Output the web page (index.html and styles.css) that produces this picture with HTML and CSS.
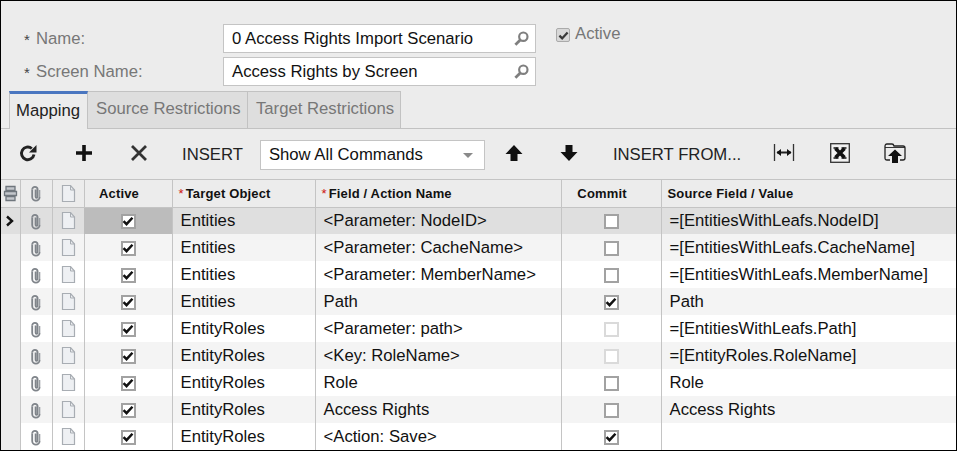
FILE: index.html
```html
<!DOCTYPE html>
<html lang="en">
<head>
<meta charset="utf-8">
<title>Mapping</title>
<link rel="stylesheet" href="styles.css">
</head>
<body>
<svg class="defs" width="0" height="0" aria-hidden="true">
  <defs>
    <symbol id="clip" viewBox="0 0 14 18"><path d="M3.200 5.500v7.500a3.700 3.700 0 0 0 7.400 0" fill="none" stroke="#7f848a" stroke-width="1.800"/><path d="M3.200 5.500a2.700 2.700 0 0 1 5.400 0v7.300a1 1 0 0 1-2 0V5.500" fill="none" stroke="#7f848a" stroke-width="1.800"/><path d="M10.600 13V6" fill="none" stroke="#9a9ea3" stroke-width="1.400"/></symbol>
    <symbol id="note" viewBox="0 0 15 17"><path d="M1.500.5h8l4 4.500v11.500h-12z" fill="#eef0f3" stroke="#a8adb3" stroke-width="1.200"/><path d="M9.500.5v4.500h4" fill="none" stroke="#a8adb3"/></symbol>
    <symbol id="search" viewBox="0 0 14 14"><circle cx="8.700" cy="5.300" r="3.900" fill="none" stroke="#7f7f7f" stroke-width="2"/><path d="M5.800 8.300 1.300 12.800" stroke="#7f7f7f" stroke-width="2.600"/></symbol>
    <symbol id="tick" viewBox="0 0 14 14"><path d="M1.800 7.200 5.300 10.700 12.200 3.200" fill="none" stroke="#111" stroke-width="2.900"/></symbol>
  </defs>
</svg>
<main class="frame">
  <section class="form">
    <div class="fields">
      <div class="field">
        <label class="label"><span class="star">*</span>Name:</label>
        <div class="input"><span>0 Access Rights Import Scenario</span><svg class="search"><use href="#search"/></svg></div>
      </div>
      <div class="field">
        <label class="label"><span class="star">*</span>Screen Name:</label>
        <div class="input"><span>Access Rights by Screen</span><svg class="search"><use href="#search"/></svg></div>
      </div>
    </div>
    <div class="active-check">
      <span class="form-box"><svg class="form-tick"><use href="#tick"/></svg></span>
      <span>Active</span>
    </div>
  </section>

  <nav class="tabs">
    <div class="tab tab-on">Mapping</div>
    <div class="tab">Source Restrictions</div>
    <div class="tab">Target Restrictions</div>
  </nav>

  <div class="toolbar">
    <button class="tool t-refresh" aria-label="Refresh"><svg width="20" height="20" viewBox="0 0 20 20"><path d="M16 11.500a6.300 6.300 0 1 1-2.200-6" fill="none" stroke="#222" stroke-width="2.900"/><path d="M11 9.500h7.500V2z" fill="#222"/></svg></button>
    <button class="tool t-add" aria-label="Add"><svg width="18" height="18" viewBox="0 0 18 18"><path d="M9 1v16M1 9h16" stroke="#111" stroke-width="3.600"/></svg></button>
    <button class="tool t-del" aria-label="Delete"><svg width="18" height="18" viewBox="0 0 18 18"><path d="M2 2l14 14M16 2 2 16" stroke="#333" stroke-width="2.800"/></svg></button>
    <button class="tool t-text t-insert">INSERT</button>
    <div class="select"><span>Show All Commands</span><i class="caret"></i></div>
    <button class="tool t-up" aria-label="Up"><svg width="18" height="18" viewBox="0 0 18 18"><path d="M9 1 17.500 10H12.500V17H5.500V10H.5z" fill="#111"/></svg></button>
    <button class="tool t-down" aria-label="Down"><svg width="18" height="18" viewBox="0 0 18 18"><path d="M9 17 17.500 8H12.500V1H5.500V8H.5z" fill="#111"/></svg></button>
    <button class="tool t-text t-from">INSERT FROM...</button>
    <button class="tool t-fit" aria-label="Fit columns"><svg width="22" height="20" viewBox="0 0 22 20"><path d="M1.500 1v17M20.500 1v17" stroke="#333" stroke-width="1.300"/><path d="M4 9.500h14" stroke="#222" stroke-width="2"/><path d="M3.500 9.500l4.500-3.500v7zM18.500 9.500l-4.500-3.500v7z" fill="#111"/></svg></button>
    <button class="tool t-xls" aria-label="Export to Excel"><svg width="20" height="20" viewBox="0 0 20 20"><rect x=".7" y=".7" width="18.600" height="18.600" fill="#f2f2f2" stroke="#333" stroke-width="1.300"/><path d="M5.500 5.500l9 9M14.500 5.500l-9 9" stroke="#111" stroke-width="3.600"/><path d="M3.500 5h5M11.500 5h5M3.500 15h5M11.500 15h5" stroke="#111" stroke-width="1.400"/></svg></button>
    <button class="tool t-upload" aria-label="Upload"><svg width="22" height="21" viewBox="0 0 22 21"><path d="M6 17H3Q1 17 1 15V3.500Q1 1 3 1h5q1.500 0 2 2h9q2 0 2 2v10q0 2-2 2h-3" fill="none" stroke="#222" stroke-width="1.300"/><path d="M1 4.500h20" stroke="#222" stroke-width=".9"/><path d="M11 6.500l7 6.500h-4v7h-6v-7H4z" fill="#111"/></svg></button>
  </div>

  <table class="grid">
    <colgroup>
      <col class="c-ind"><col class="c-clip"><col class="c-note"><col class="c-active"><col class="c-target"><col class="c-field"><col class="c-commit"><col class="c-source">
    </colgroup>
    <thead>
      <tr>
        <th class="ind"><svg width="15" height="17" viewBox="0 0 15 17"><path d="M3 1.500h9v4H3zM1.500 6.500h12v4h-12zM3 11.500h9v4H3z" fill="#c3c7cc" stroke="#6f767d" stroke-width="1.300"/></svg></th>
        <th class="ico"><svg class="i-clip"><use href="#clip"/></svg></th>
        <th class="ico"><svg class="i-note"><use href="#note"/></svg></th>
        <th class="mid">Active</th>
        <th><span class="req">*</span>Target Object</th>
        <th><span class="req">*</span>Field / Action Name</th>
        <th class="mid">Commit</th>
        <th>Source Field / Value</th>
      </tr>
    </thead>
    <tbody>
      <tr class="sel">
        <td class="ind"><svg width="10" height="12" viewBox="0 0 10 12"><path d="M2 1.500 7 6 2 10.500" fill="none" stroke="#111" stroke-width="2.400"/></svg></td>
        <td class="ico"><svg class="i-clip"><use href="#clip"/></svg></td><td class="ico"><svg class="i-note"><use href="#note"/></svg></td>
        <td class="mid cur"><span class="box"><svg class="tick"><use href="#tick"/></svg></span></td>
        <td>Entities</td><td>&lt;Parameter: NodeID&gt;</td><td class="mid"><span class="box"></span></td><td>=[EntitiesWithLeafs.NodeID]</td>
      </tr>
      <tr class="alt">
        <td class="ind"></td><td class="ico"><svg class="i-clip"><use href="#clip"/></svg></td><td class="ico"><svg class="i-note"><use href="#note"/></svg></td>
        <td class="mid"><span class="box"><svg class="tick"><use href="#tick"/></svg></span></td>
        <td>Entities</td><td>&lt;Parameter: CacheName&gt;</td><td class="mid"><span class="box"></span></td><td>=[EntitiesWithLeafs.CacheName]</td>
      </tr>
      <tr>
        <td class="ind"></td><td class="ico"><svg class="i-clip"><use href="#clip"/></svg></td><td class="ico"><svg class="i-note"><use href="#note"/></svg></td>
        <td class="mid"><span class="box"><svg class="tick"><use href="#tick"/></svg></span></td>
        <td>Entities</td><td>&lt;Parameter: MemberName&gt;</td><td class="mid"><span class="box"></span></td><td>=[EntitiesWithLeafs.MemberName]</td>
      </tr>
      <tr class="alt">
        <td class="ind"></td><td class="ico"><svg class="i-clip"><use href="#clip"/></svg></td><td class="ico"><svg class="i-note"><use href="#note"/></svg></td>
        <td class="mid"><span class="box"><svg class="tick"><use href="#tick"/></svg></span></td>
        <td>Entities</td><td>Path</td><td class="mid"><span class="box"><svg class="tick"><use href="#tick"/></svg></span></td><td>Path</td>
      </tr>
      <tr>
        <td class="ind"></td><td class="ico"><svg class="i-clip"><use href="#clip"/></svg></td><td class="ico"><svg class="i-note"><use href="#note"/></svg></td>
        <td class="mid"><span class="box"><svg class="tick"><use href="#tick"/></svg></span></td>
        <td>EntityRoles</td><td>&lt;Parameter: path&gt;</td><td class="mid"><span class="box off"></span></td><td>=[EntitiesWithLeafs.Path]</td>
      </tr>
      <tr class="alt">
        <td class="ind"></td><td class="ico"><svg class="i-clip"><use href="#clip"/></svg></td><td class="ico"><svg class="i-note"><use href="#note"/></svg></td>
        <td class="mid"><span class="box"><svg class="tick"><use href="#tick"/></svg></span></td>
        <td>EntityRoles</td><td>&lt;Key: RoleName&gt;</td><td class="mid"><span class="box off"></span></td><td>=[EntityRoles.RoleName]</td>
      </tr>
      <tr>
        <td class="ind"></td><td class="ico"><svg class="i-clip"><use href="#clip"/></svg></td><td class="ico"><svg class="i-note"><use href="#note"/></svg></td>
        <td class="mid"><span class="box"><svg class="tick"><use href="#tick"/></svg></span></td>
        <td>EntityRoles</td><td>Role</td><td class="mid"><span class="box"></span></td><td>Role</td>
      </tr>
      <tr class="alt">
        <td class="ind"></td><td class="ico"><svg class="i-clip"><use href="#clip"/></svg></td><td class="ico"><svg class="i-note"><use href="#note"/></svg></td>
        <td class="mid"><span class="box"><svg class="tick"><use href="#tick"/></svg></span></td>
        <td>EntityRoles</td><td>Access Rights</td><td class="mid"><span class="box"></span></td><td>Access Rights</td>
      </tr>
      <tr>
        <td class="ind"></td><td class="ico"><svg class="i-clip"><use href="#clip"/></svg></td><td class="ico"><svg class="i-note"><use href="#note"/></svg></td>
        <td class="mid"><span class="box"><svg class="tick"><use href="#tick"/></svg></span></td>
        <td>EntityRoles</td><td>&lt;Action: Save&gt;</td><td class="mid"><span class="box"><svg class="tick"><use href="#tick"/></svg></span></td><td></td>
      </tr>
    </tbody>
  </table>
</main>
</body>
</html>
```

FILE: styles.css
```css
* { box-sizing: border-box; }
html, body { margin: 0; padding: 0; }
body { width: 957px; height: 451px; overflow: hidden; font-family: "Liberation Sans", Arial, sans-serif; font-size: 16.7px; color: #111; }
.defs { display: block; height: 0; }
.frame { width: 957px; height: 451px; background: #ececec; border: 1px solid #000; overflow: hidden; display: flex; flex-direction: column; }

.form { display: flex; padding-top: 23px; height: 90px; flex: none; }
.fields { display: flex; flex-direction: column; gap: 4px; }
.field { display: flex; align-items: center; height: 29px; }
.label { width: 222px; padding-left: 23px; color: #777; display: flex; align-items: center; }
.star { width: 12px; font-size: 15px; color: #444; position: relative; top: 1px; }
.input { width: 313px; height: 29px; background: #fff; border: 1px solid #c4c4c4; padding: 0 6px 0 8px; display: flex; align-items: center; justify-content: space-between; color: #111; }
.search { width: 15px; height: 15px; }
.active-check { display: flex; align-items: flex-start; margin-left: 20px; color: #777; line-height: 20px; gap: 5px; }
.form-box { width: 14px; height: 14px; margin-top: 4px; background: #d8d8d8; border: 1px solid #aaa; border-radius: 2px; display: flex; align-items: center; justify-content: center; }
.form-tick { width: 11px; height: 11px; opacity: .8; }

.tabs { display: flex; height: 38px; flex: none; padding-left: 8px; border-bottom: 1px solid #c2c2c2; }
.tab { background: #dedede; color: #777; padding: 8px 7px 0 8px; border-top: 1px solid #c2c2c2; border-right: 1px solid #c2c2c2; height: 37px; line-height: 18px; white-space: nowrap; }
.tab-on { width: 79px; height: 38px; background: #ececec; color: #222; border-top: 3px solid #4a76c0; border-left: 1px solid #c2c2c2; padding: 7px 0 0 6px; line-height: 19px; }
.tab:nth-child(2) { width: 160px; }
.tab:nth-child(3) { width: 153px; }

.toolbar { display: flex; align-items: center; height: 51px; flex: none; border-bottom: 1px solid #c4c4c4; padding-bottom: 2px; }
.tool { background: none; border: 0; padding: 0; font: inherit; color: #222; display: flex; align-items: center; justify-content: center; white-space: nowrap; }
.t-text { padding-top: 3px; }
.t-refresh { margin-left: 17px; }
.t-add { margin-left: 37px; }
.t-del { margin-left: 37px; }
.t-insert { margin-left: 34px; }
.select { margin-left: 17px; width: 225px; height: 30px; background: #fff; border: 1px solid #c4c4c4; padding: 0 11px 0 8px; display: flex; align-items: center; justify-content: space-between; position: relative; top: 2px; }
.caret { width: 0; height: 0; border-left: 5px solid transparent; border-right: 5px solid transparent; border-top: 5px solid #8a8a8a; }
.t-up { margin-left: 20px; }
.t-down { margin-left: 37px; }
.t-from { margin-left: 35px; }
.t-fit { margin-left: 32px; }
.t-xls { margin-left: 35px; }
.t-upload { margin-left: 34px; }

.grid { width: 955px; table-layout: fixed; border-collapse: collapse; flex: none; background: #fff; }
.c-ind { width: 19px; }
.c-clip, .c-note { width: 32px; }
.c-active { width: 88px; }
.c-target { width: 143px; }
.c-field { width: 246px; }
.c-commit { width: 100px; }
.grid th { height: 27px; background: #ececec; font-size: 13px; letter-spacing: .15px; text-align: left; padding: 0 6px; border-right: 1px solid #c4c4c4; border-bottom: 1px solid #c4c4c4; white-space: nowrap; }
.grid td { height: 27px; padding: 0 8px; border-right: 1px solid #c4c4c4; white-space: nowrap; overflow: hidden; }
.grid th:last-child, .grid td:last-child { border-right: 0; }
.grid th.mid { text-align: center; padding: 0 18px 0 0; }
.grid td.mid { text-align: center; padding: 0; }
.grid th.ico, .grid td.ico, .grid th.ind, .grid td.ind { text-align: center; padding: 0; line-height: 0; }
.grid td.ind { background: #ececec; }
.grid svg { vertical-align: middle; }
.req { color: #c11; margin-right: 2px; font-weight: 400; }
.alt td { background: #f4f4f4; }
.sel td { background: #dfdfdf; }
.grid .sel td.ind { background: #dfdfdf; }
.grid .sel td:nth-child(3) { border-right-color: #bcbcbc; }
.sel td.cur { background: #bcbcbc; }
.i-clip { width: 14px; height: 18px; }
.i-note { width: 15px; height: 17px; }
.box { display: inline-flex; align-items: center; justify-content: center; width: 15px; height: 15px; background: #fff; border: 2px solid #a2a2a2; vertical-align: middle; }
.box.off { border-color: #dadada; }
.tick { width: 12px; height: 12px; flex: none; }
```
